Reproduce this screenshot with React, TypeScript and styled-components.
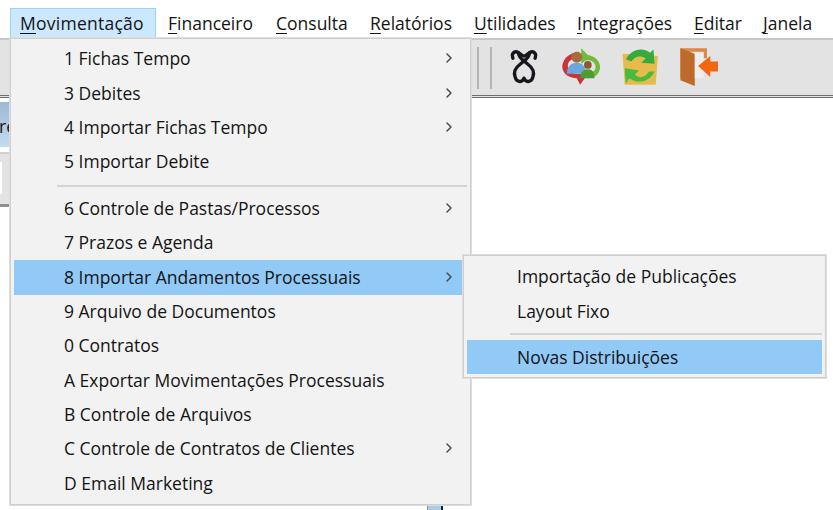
import React from 'react';
import styled, { createGlobalStyle } from 'styled-components';
import { ChevronRight } from 'lucide-react';

const GlobalStyle = createGlobalStyle`
  html, body {
    margin: 0;
    padding: 0;
    background: #fff;
    overflow: hidden;
  }
  body {
    font-family: "Open Sans", "Noto Sans", sans-serif;
    color: #141414;
  }
`;

const Page = styled.div`
  position: relative;
  width: 833px;
  height: 510px;
  overflow: hidden;
`;

const MenuBar = styled.div`
  display: flex;
  align-items: flex-end;
  height: 38px;
  padding-left: 10px;
  box-sizing: border-box;
  background: #fff;
`;

const BarItem = styled.div<{ $open?: boolean; $w: number }>`
  width: ${p => p.$w}px;
  height: 30px;
  box-sizing: border-box;
  padding-left: ${p => (p.$open ? 9 : 11)}px;
  font-size: 17.5px;
  letter-spacing: ${p => (p.$open ? 0.25 : 0)}px;
  line-height: 28px;
  white-space: nowrap;
  background: ${p => (p.$open ? '#cce8ff' : 'transparent')};
  border: 1px solid ${p => (p.$open ? '#99d1ff' : 'transparent')};
  border-bottom: none;
  u {
    text-underline-offset: 3px;
    text-decoration-thickness: 1px;
  }
`;

const Toolbar = styled.div`
  display: flex;
  align-items: center;
  height: 60px;
  box-sizing: border-box;
  padding-left: 477px;
  background: #e3e3e3;
  border-top: 2px solid #c8c8c8;
  border-bottom: 3px double #6f6f6f;
`;

const Grip = styled.div`
  width: 2px;
  height: 42px;
  margin-right: 11px;
  background: #b4b4b4;
`;

const ToolIcon = styled.svg`
  display: block;
  width: 42px;
  height: 42px;
  margin: 0 17px 4px 0;
  flex: none;
`;

const FirstIcon = styled(ToolIcon)`
  margin-right: 13px;
`;

const LeftStrip = styled.div`
  display: flex;
  flex-direction: column;
  width: 10px;
  padding-top: 4px;
`;

const TabPiece = styled.div`
  height: 45px;
  overflow: hidden;
  font-size: 17.5px;
  line-height: 48px;
  background: linear-gradient(#9db8d4, #c3dcf5);
  text-indent: -1px;
`;

const FilterPiece = styled.div`
  height: 55px;
  margin-top: 5px;
  background: #e3e3e3;
  border-top: 2px solid #cfcfcf;
  border-bottom: 3px solid #8f8f8f;
  box-sizing: border-box;
  padding: 8px 8px 10px 0;
`;

const FilterInput = styled.div`
  height: 100%;
  background: #fff;
`;

const Popup = styled.div`
  position: absolute;
  box-sizing: border-box;
  display: flex;
  flex-direction: column;
  padding: 3px;
  background: #f2f2f2;
  border: 1px solid #cfcfcf;
  outline: 1px solid #dedede;
  z-index: 2;
`;

const Row = styled.div<{ $active?: boolean; $indent: number }>`
  display: flex;
  align-items: center;
  justify-content: space-between;
  flex: none;
  box-sizing: border-box;
  height: 34.4px;
  padding-left: ${p => p.$indent}px;
  padding-right: 9px;
  font-size: 17.5px;
  white-space: nowrap;
  background: ${p => (p.$active ? '#91c9f7' : 'transparent')};
`;

const MainMenu = styled(Popup)`
  left: 10px;
  top: 38px;
  width: 461px;
  height: 467px;
  ${Row} {
    padding-bottom: 2px;
  }
`;

const SubMenu = styled(Popup)`
  left: 463px;
  top: 255px;
  width: 363px;
  height: 123px;
  z-index: 3;
`;

const Arrow = styled(ChevronRight)`
  width: 16px;
  height: 16px;
  color: #4a4a4a;
  stroke-width: 2.2;
  margin-right: 1px;
`;

const Separator = styled.div<{ $indent: number }>`
  flex: none;
  height: 2px;
  margin: 5px 0 5px ${p => p.$indent}px;
  background: #d4d4d4;
`;

const BackgroundSliver = styled.div`
  position: absolute;
  left: 427px;
  top: 505px;
  width: 16px;
  height: 5px;
  background: #a9cdea;
  border-left: 1px solid #888;
  border-right: 2px solid #123;
  box-sizing: border-box;
`;

type MenuEntry = { label: string; sub?: boolean; active?: boolean } | 'sep';

const mainEntries: MenuEntry[] = [
  { label: '1 Fichas Tempo', sub: true },
  { label: '3 Debites', sub: true },
  { label: '4 Importar Fichas Tempo', sub: true },
  { label: '5 Importar Debite' },
  'sep',
  { label: '6 Controle de Pastas/Processos', sub: true },
  { label: '7 Prazos e Agenda' },
  { label: '8 Importar Andamentos Processuais', sub: true, active: true },
  { label: '9 Arquivo de Documentos' },
  { label: '0 Contratos' },
  { label: 'A Exportar Movimentações Processuais' },
  { label: 'B Controle de Arquivos' },
  { label: 'C Controle de Contratos de Clientes', sub: true },
  { label: 'D Email Marketing' },
];

const subEntries: MenuEntry[] = [
  { label: 'Importação de Publicações' },
  { label: 'Layout Fixo' },
  'sep',
  { label: 'Novas Distribuições', active: true },
];

const barItems = [
  { key: 'M', rest: 'ovimentação', w: 146 },
  { key: 'F', rest: 'inanceiro', w: 108 },
  { key: 'C', rest: 'onsulta', w: 94 },
  { key: 'R', rest: 'elatórios', w: 104 },
  { key: 'U', rest: 'tilidades', w: 103 },
  { key: 'I', rest: 'ntegrações', w: 117 },
  { key: 'E', rest: 'ditar', w: 69 },
  { key: 'J', rest: 'anela', w: 70 },
];

const renderEntries = (entries: MenuEntry[], indent: number) =>
  entries.map((entry, i) =>
    entry === 'sep' ? (
      <Separator key={i} $indent={indent - 7} />
    ) : (
      <Row key={i} $indent={indent} $active={entry.active}>
        <span>{entry.label}</span>
        {entry.sub && <Arrow />}
      </Row>
    )
  );

const App: React.FC = () => (
  <Page>
    <GlobalStyle />
    <MenuBar>
      {barItems.map((item, i) => (
        <BarItem key={item.key} $open={i === 0} $w={item.w}>
          <u>{item.key}</u>
          {item.rest}
        </BarItem>
      ))}
    </MenuBar>
    <Toolbar>
      <Grip />
      <Grip />
      <FirstIcon viewBox="0 0 38 38">
        <g fill="none" stroke="#16161c" strokeWidth="3" strokeLinecap="round" strokeLinejoin="round">
          <path d="M9 12C7 7 11 5 14 7c2 1 3 3 5 3s3-2 5-3c3-2 7 0 5 5" />
          <path d="M14 7c0 5 5 7 8 10 4 3 7 7 5 12-1 4-6 6-8 1-2 5-7 3-8-1-2-5 1-9 5-12 3-3 8-5 8-10" />
        </g>
      </FirstIcon>
      <ToolIcon viewBox="0 0 38 38">
        <path d="M19 6C9 7 3 14 4 21c1 6 7 9 13 9l3 6 5-7-5-3c-5 1-10-1-11-6-1-5 4-9 10-9z" fill="#c8343a" />
        <path d="M21 3l6 6c6 1 11 5 11 11 0 7-6 11-13 10v-5c5 1 9-1 9-5 0-5-5-7-9-6l-4 3z" fill="#6fbb3c" />
        <circle cx="17" cy="11" r="5" fill="#a86a3f" />
        <path d="M8 26c0-7 4-10 9-10s8 3 8 10z" fill="#6ca6dc" />
        <circle cx="27" cy="18" r="3.5" fill="#8a5a34" />
        <path d="M20 30c0-5 3-8 7-8s6 3 6 8z" fill="#4f9a35" />
      </ToolIcon>
      <ToolIcon viewBox="0 0 38 38">
        <path d="M5 8l32 2-2 26H7z" fill="#e6bb4a" />
        <path d="M8 13C12 5 22 1 30 7l3-3 1 13-12-1 4-4c-5-3-10-2-13 3z" fill="#35ab3d" />
        <path d="M34 24c-4 9-15 12-23 6l-3 5-1-14 13 2-4 4c5 4 10 2 13-3z" fill="#45bb40" />
      </ToolIcon>
      <ToolIcon viewBox="0 0 38 38">
        <path d="M4 3h24v9h-3V6H12v24H4z" fill="#d9894a" />
        <path d="M4 3l13 5v29L4 32z" fill="#bd6a2c" />
        <path d="M17 7h8v23h-8z" fill="#eeeeee" />
        <path d="M20 19l11-9v5h9v9h-9v5z" fill="#f4660f" />
      </ToolIcon>
    </Toolbar>
    <LeftStrip>
      <TabPiece>re</TabPiece>
      <FilterPiece>
        <FilterInput />
      </FilterPiece>
    </LeftStrip>
    <BackgroundSliver />
    <MainMenu>{renderEntries(mainEntries, 50)}</MainMenu>
    <SubMenu>{renderEntries(subEntries, 50)}</SubMenu>
  </Page>
);

export default App;
